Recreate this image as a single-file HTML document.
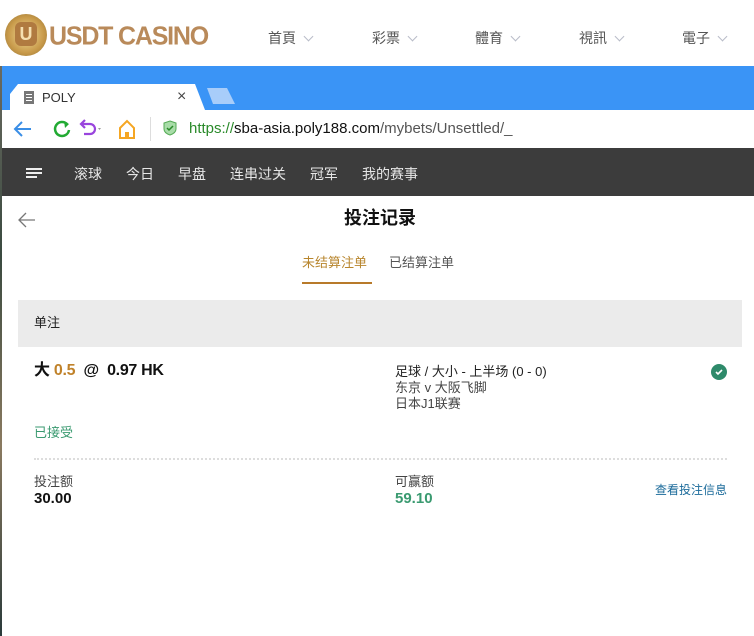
<!DOCTYPE html>
<html><head><meta charset="utf-8"><style>
*{margin:0;padding:0;box-sizing:border-box}
body{width:754px;height:636px;overflow:hidden;background:#fff;font-family:"Liberation Sans","Noto Sans CJK SC",sans-serif;position:relative}
.a{position:absolute;line-height:1.15}
.nav span{position:absolute;top:28px;font-size:14px;color:#555}
.nav i{display:inline-block;width:7px;height:7px;border-right:1.5px solid #b8bcc8;border-bottom:1.5px solid #b8bcc8;transform:rotate(45deg);margin-left:9px;position:relative;top:-3px}
.dk span{position:absolute;top:164px;font-size:14px;color:#e6e6e6}
</style></head><body>
<div class="a" style="left:0;top:0;width:754px;height:66px;background:#fff;box-shadow:0 2px 3px rgba(0,0,0,.15)"></div>
<div class="a" style="left:5px;top:14px;width:42px;height:42px;border-radius:50%;background:radial-gradient(circle,#f3dc9a 0,#c89a4a 60%,#8a6a30 100%)"></div>
<div class="a" style="left:15px;top:22px;width:22px;height:24px;border-radius:6px;background:#b07a40;color:#f5e0b0;font:bold 18px 'Liberation Sans';text-align:center;line-height:24px">U</div>
<div class="a" style="left:49px;top:22px;font:bold 25px 'Liberation Sans',sans-serif;color:#b98a5a;letter-spacing:-1.2px;transform:scaleY(1.05)">USDT CASINO</div>
<div class="nav">
<span style="left:268px">首頁<i></i></span>
<span style="left:372px">彩票<i></i></span>
<span style="left:475px">體育<i></i></span>
<span style="left:579px">視訊<i></i></span>
<span style="left:682px">電子<i></i></span>
</div>
<div class="a" style="left:0;top:66px;width:2px;height:570px;background:linear-gradient(#6a6a60,#3a4a40,#8a7a60,#2a3a3a)"></div>
<div class="a" style="left:2px;top:66px;width:752px;height:44px;background:#3a94f6"></div>
<div class="a" style="left:10px;top:84px;width:195px;height:26px;background:#fff;border-radius:8px 8px 0 0;clip-path:polygon(8px 0,185px 0,195px 26px,0 26px,0 10px)"></div>
<div class="a" style="left:207px;top:88px;width:28px;height:16px;background:#a8cdfa;clip-path:polygon(0 0,20px 0,28px 16px,6px 16px)"></div>
<div class="a" style="left:24px;top:91px;width:10px;height:13px;background:#777"></div>
<div class="a" style="left:26px;top:94px;width:6px;height:1px;background:#fff;box-shadow:0 3px #fff,0 6px #fff"></div>
<div class="a" style="left:42px;top:91px;font-size:13px;color:#333">POLY</div>
<div class="a" style="left:177px;top:88px;font-size:16px;color:#444">×</div>
<div class="a" style="left:2px;top:110px;width:752px;height:38px;background:#fff"></div>
<svg class="a" style="left:12px;top:118px" width="130" height="22">
<path d="M19 11H3M10 4l-7 7 7 7" stroke="#3a8ee6" stroke-width="2" fill="none"/>
<path d="M55 6a7 7 0 1 0 2 6" stroke="#22aa33" stroke-width="2.5" fill="none"/><path d="M52 3l5 3-4 4z" fill="#22aa33"/>
<path d="M70 6h8a5 5 0 0 1 0 10h-6M73 2l-4 4 4 4" stroke="#9944dd" stroke-width="2.2" fill="none"/><path d="M86 10l3 0-1.5 2z" fill="#999"/>
<path d="M108 10l7-7 7 7v10h-14z" stroke="#f5a623" stroke-width="2" fill="none"/><rect x="113" y="14" width="4" height="6" fill="#f5a623"/>
</svg>
<div class="a" style="left:150px;top:117px;width:1px;height:24px;background:#ddd"></div>
<svg class="a" style="left:163px;top:120px" width="14" height="16"><path d="M7 1l6 2v6c0 3-3 5-6 6-3-1-6-3-6-6V3z" fill="#a8dca8" stroke="#55aa55"/><path d="M4 8l2 2 4-4" stroke="#2a8a2a" stroke-width="1.5" fill="none"/></svg>
<div class="a" style="left:189px;top:120px;font-size:15px;color:#555"><span style="color:#2a8a2a">https://</span><span style="color:#111">sba-asia.poly188.com</span>/mybets/Unsettled/_</div>
<div class="a" style="left:2px;top:148px;width:752px;height:48px;background:#3c3c3c"></div>
<div class="a" style="left:26px;top:168px;width:16px;height:2px;background:#eee;box-shadow:0 4px #eee"></div>
<div class="a" style="left:26px;top:176px;width:11px;height:2px;background:#eee"></div>
<div class="dk"><span style="left:74px">滚球</span><span style="left:126px">今日</span><span style="left:178px">早盘</span><span style="left:230px">连串过关</span><span style="left:310px">冠军</span><span style="left:362px">我的赛事</span></div>
<svg class="a" style="left:17px;top:212px" width="18" height="16"><path d="M18 8H2M9 1L2 8l7 7" stroke="#777" stroke-width="1.3" fill="none"/></svg>
<div class="a" style="left:344px;top:208px;font-size:18px;font-weight:bold;color:#111">投注记录</div>
<div class="a" style="left:302px;top:256px;font-size:13px;color:#b8862e">未结算注单</div>
<div class="a" style="left:389px;top:256px;font-size:13px;color:#555">已结算注单</div>
<div class="a" style="left:302px;top:282px;width:70px;height:2px;background:#b87a2a"></div>
<div class="a" style="left:18px;top:300px;width:724px;height:47px;background:#ebebeb"></div>
<div class="a" style="left:34px;top:316px;font-size:13px;color:#222">单注</div>
<div class="a" style="left:34px;top:362px;font-size:16px;font-weight:bold;color:#111;letter-spacing:-0.3px">大 <span style="color:#c0822a">0.5</span> &nbsp;@ &nbsp;0.97 HK</div>
<div class="a" style="left:395px;top:364px;font-size:13px;color:#222;line-height:16px">足球 / 大小 - 上半场 (0 - 0)<br><span style="color:#444">东京 v 大阪飞脚<br>日本J1联赛</span></div>
<div class="a" style="left:711px;top:364px;width:16px;height:16px;border-radius:50%;background:#2e8a6a"></div>
<svg class="a" style="left:711px;top:364px" width="16" height="16"><path d="M5 8l2 2 4-4" stroke="#fff" stroke-width="1.6" fill="none"/></svg>
<div class="a" style="left:34px;top:426px;font-size:13px;color:#3a9a70">已接受</div>
<div class="a" style="left:34px;top:458px;width:693px;border-top:2px dotted #ddd"></div>
<div class="a" style="left:34px;top:475px;font-size:13px;color:#444">投注额</div>
<div class="a" style="left:34px;top:490px;font-size:15px;font-weight:bold;color:#111">30.00</div>
<div class="a" style="left:395px;top:475px;font-size:13px;color:#444">可赢额</div>
<div class="a" style="left:395px;top:490px;font-size:15px;font-weight:bold;color:#3a9a70">59.10</div>
<div class="a" style="left:655px;top:484px;font-size:12px;color:#1a6a9a">查看投注信息</div>
</body></html>
